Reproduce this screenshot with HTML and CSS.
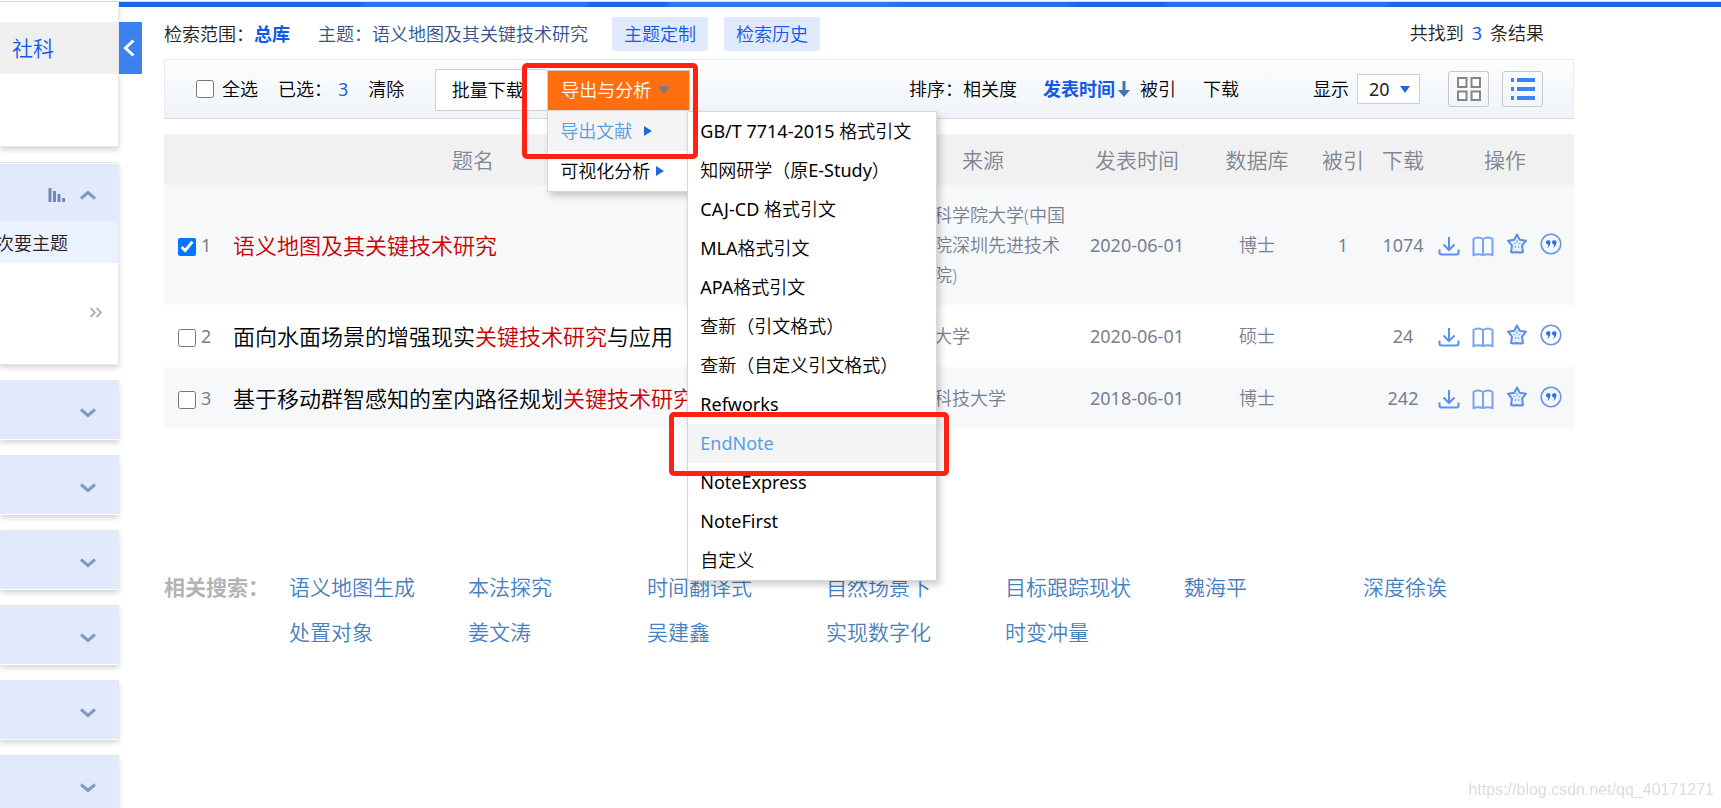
FILE: index.html
```html
<!DOCTYPE html>
<html lang="zh-CN">
<head>
<meta charset="utf-8">
<title>语义地图及其关键技术研究</title>
<link rel="stylesheet" href="styles.css">
</head>
<body>
<svg class="defs" aria-hidden="true">
  <symbol id="i-download" viewBox="0 0 22 22"><path d="M11 2v13M5.500 9.500L11 15l5.500-5.500M1.500 14.500v3q0 2 2 2h15q2 0 2-2v-3" fill="none" stroke="#5a90f2" stroke-width="2"/></symbol>
  <symbol id="i-book" viewBox="0 0 22 22"><path d="M1.500 4Q6 1 11 4Q16 1 20.500 4V20Q16 18.500 11 20Q6 18.500 1.500 20ZM11 4v16" fill="none" stroke="#76a3f4" stroke-width="2"/></symbol>
  <symbol id="i-star" viewBox="0 0 22 22"><path d="M11 1.500l2.700 5.300 6.300.9-4 5 1 6.300q-3 1-6 0-3 1-6 0l1-6.300-4-5 6.300-.9Z" fill="#e6f1fc" stroke="#5a90de" stroke-width="2" stroke-linejoin="round"/><path d="M11 7v3M7.500 10l2 1M14.500 10l-2 1M9 15l1-2M13 15l-1-2" stroke="#6a9ce6" stroke-width="1"/></symbol>
  <symbol id="i-quote" viewBox="0 0 22 22"><circle cx="11" cy="11" r="9.800" fill="none" stroke="#6496ea" stroke-width="1.600"/><path d="M6 9.500a2.200 2.200 0 1 1 4.300.5Q10 13.500 6.800 15q1.500-1.500 1.500-3.200Q6 11.500 6 9.500ZM12 9.500a2.200 2.200 0 1 1 4.300.5Q16 13.500 12.800 15q1.500-1.500 1.500-3.200Q12 11.500 12 9.500Z" fill="#2f6fe4"/></symbol>
  <symbol id="i-down" viewBox="0 0 16 10"><path d="M1 1.500l7 6 7-6" fill="none" stroke="#7f99c8" stroke-width="3"/></symbol>
</svg>
<div class="page">
  <aside class="sidebar">
    <section class="panel subjects"><a class="subject" href="#">社科</a></section>
    <section class="panel topics">
      <div class="panel-head">
        <svg width="18" height="16" viewBox="0 0 18 16"><path d="M2 1v14M6.500 4v11M11 7v8M15.500 11v4" stroke="#7088bc" stroke-width="3"/></svg>
        <svg class="up" width="16" height="10"><use href="#i-down"/></svg>
      </div>
      <div class="topic-tab">次要主题</div>
      <a class="more" href="#" aria-label="更多"><svg width="14" height="11" viewBox="0 0 14 11"><path d="M1.500 1l4.500 4.500-4.500 4.500M7.500 1l4.500 4.500-4.500 4.500" fill="none" stroke="#b4b4b4" stroke-width="2"/></svg></a>
    </section>
    <section class="panel folded"><svg width="16" height="10"><use href="#i-down"/></svg></section>
    <section class="panel folded"><svg width="16" height="10"><use href="#i-down"/></svg></section>
    <section class="panel folded"><svg width="16" height="10"><use href="#i-down"/></svg></section>
    <section class="panel folded"><svg width="16" height="10"><use href="#i-down"/></svg></section>
    <section class="panel folded"><svg width="16" height="10"><use href="#i-down"/></svg></section>
    <section class="panel folded"><svg width="16" height="10"><use href="#i-down"/></svg></section>
  </aside>
  <div class="content">
    <div class="strip"></div>
    <div class="columns">
      <button class="collapse" aria-label="收起"><svg width="12" height="18" viewBox="0 0 12 18"><path d="M10.500 1.500L2.500 9l8 7.500" fill="none" stroke="#fff" stroke-width="3"/></svg></button>
      <main class="main">
        <header class="scope">
          <p>检索范围：<b class="blue">总库</b></p>
          <p class="theme">主题：语义地图及其关键技术研究</p>
          <button class="tag">主题定制</button>
          <button class="tag">检索历史</button>
          <p class="count"><span>共找到</span><span class="blue en">3</span><span>条结果</span></p>
        </header>
        <div class="toolbar">
          <label class="all"><input type="checkbox">全选</label>
          <span class="picked">已选：<span class="num en">3</span></span>
          <a class="clear" href="#">清除</a>
          <button class="batch">批量下载</button>
          <div class="export">
            <button class="export-btn">导出与分析<svg width="14" height="10" viewBox="0 0 14 10"><path d="M1 1h12L7 9Z" fill="#7b7b7b"/></svg></button>
            <ul class="menu">
              <li class="on">导出文献<svg class="tri" width="8" height="10" viewBox="0 0 8 10"><path d="M0 0l8 5-8 5Z" fill="#2468d4"/></svg>
                <ul class="menu sub">
                  <li><span class="en">GB/T 7714-2015</span> 格式引文</li>
                  <li>知网研学（原<span class="en">E-Study</span>）</li>
                  <li><span class="en">CAJ-CD</span> 格式引文</li>
                  <li><span class="en">MLA</span>格式引文</li>
                  <li><span class="en">APA</span>格式引文</li>
                  <li>查新（引文格式）</li>
                  <li>查新（自定义引文格式）</li>
                  <li class="en">Refworks</li>
                  <li class="en on">EndNote<span class="mark mark-item"></span></li>
                  <li class="en">NoteExpress</li>
                  <li class="en">NoteFirst</li>
                  <li>自定义</li>
                </ul>
              </li>
              <li>可视化分析<svg class="tri near" width="8" height="10" viewBox="0 0 8 10"><path d="M0 0l8 5-8 5Z" fill="#2468d4"/></svg></li>
            </ul>
            <span class="mark mark-export"></span>
          </div>
          <nav class="sort">
            <span>排序：</span><a href="#">相关度</a>
            <a class="blue current" href="#">发表时间<svg width="12" height="17" viewBox="0 0 12 17"><path d="M6 0v11" stroke="#4a70b0" stroke-width="3"/><path d="M0 9h12L6 16Z" fill="#4a70b0"/></svg></a>
            <a class="cited" href="#">被引</a><a class="down" href="#">下载</a>
          </nav>
          <label class="size-label" for="size">显示</label>
          <div class="size"><select id="size" class="en"><option>20</option></select></div>
          <button class="view" aria-label="网格"><svg width="26" height="26" viewBox="0 0 26 26"><path d="M2 2h8.500v9H2ZM15.500 2H24v9h-8.500ZM2 15.500h8.500v8.500H2ZM15.500 15.500H24v8.500h-8.500Z" fill="#fff" stroke="#858585" stroke-width="2"/></svg></button>
          <button class="view list" aria-label="列表"><svg width="26" height="24" viewBox="0 0 26 24"><path d="M1 3h3M1 12h3M1 21h3M7 3h18M7 12h18M7 21h18" stroke="#3d83f7" stroke-width="4"/></svg></button>
        </div>
        <table class="results">
          <colgroup><col class="c-check"><col><col class="c-author"><col class="c-source"><col class="c-date"><col class="c-db"><col class="c-cited"><col class="c-dl"><col class="c-ops"></colgroup>
          <thead><tr><th></th><th>题名</th><th></th><th>来源</th><th>发表时间</th><th>数据库</th><th>被引</th><th>下载</th><th>操作</th></tr></thead>
          <tbody>
            <tr>
              <td class="check en"><label><input type="checkbox" checked>1</label></td>
              <td class="title"><a href="#"><em>语义地图及其关键技术研究</em></a></td><td></td>
              <td class="source">中国科学院大学(中国科学院深圳先进技术研究院)</td><td class="en">2020-06-01</td><td>博士</td><td class="en">1</td><td class="en">1074</td>
              <td><div class="ops"><a href="#" aria-label="下载"><svg><use href="#i-download"/></svg></a><a href="#" aria-label="阅读"><svg><use href="#i-book"/></svg></a><a class="high" href="#" aria-label="收藏"><svg><use href="#i-star"/></svg></a><a class="high" href="#" aria-label="引用"><svg><use href="#i-quote"/></svg></a></div></td>
            </tr>
            <tr>
              <td class="check en"><label><input type="checkbox">2</label></td>
              <td class="title"><a href="#">面向水面场景的增强现实<em>关键技术研究</em>与应用</a></td><td></td>
              <td class="source">武汉大学</td><td class="en">2020-06-01</td><td>硕士</td><td></td><td class="en">24</td>
              <td><div class="ops"><a href="#" aria-label="下载"><svg><use href="#i-download"/></svg></a><a href="#" aria-label="阅读"><svg><use href="#i-book"/></svg></a><a class="high" href="#" aria-label="收藏"><svg><use href="#i-star"/></svg></a><a class="high" href="#" aria-label="引用"><svg><use href="#i-quote"/></svg></a></div></td>
            </tr>
            <tr>
              <td class="check en"><label><input type="checkbox">3</label></td>
              <td class="title"><a href="#">基于移动群智感知的室内路径规划<em>关键技术研究</em></a></td><td></td>
              <td class="source">电子科技大学</td><td class="en">2018-06-01</td><td>博士</td><td></td><td class="en">242</td>
              <td><div class="ops"><a href="#" aria-label="下载"><svg><use href="#i-download"/></svg></a><a href="#" aria-label="阅读"><svg><use href="#i-book"/></svg></a><a class="high" href="#" aria-label="收藏"><svg><use href="#i-star"/></svg></a><a class="high" href="#" aria-label="引用"><svg><use href="#i-quote"/></svg></a></div></td>
            </tr>
          </tbody>
        </table>
        <section class="related">
          <h2>相关搜索：</h2>
          <div class="links">
            <a href="#">语义地图生成</a><a href="#">本法探究</a><a href="#">时间翻译式</a><a href="#">自然场景下</a><a href="#">目标跟踪现状</a><a href="#">魏海平</a><a href="#">深度徐诶</a>
            <a href="#">处置对象</a><a href="#">姜文涛</a><a href="#">吴建鑫</a><a href="#">实现数字化</a><a href="#">时变冲量</a>
          </div>
        </section>
      </main>
    </div>
  </div>
</div>
<p class="watermark">https://blog.csdn.net/qq_40171271</p>
</body>
</html>
```
FILE: styles.css
```css
* { box-sizing: border-box; }
body {
  margin: 0;
  height: 100vh;
  overflow: hidden;
  background: #fff;
  color: #000;
  font: 350 18px/30px "Open Sans", "Noto Sans CJK SC", sans-serif;
}
p, h2, ul { margin: 0; padding: 0; }
ul { list-style: none; }
a { color: inherit; text-decoration: none; }
button, select, input { font: inherit; color: inherit; margin: 0; }
button { padding: 0; border: 0; background: none; }
svg { display: block; flex: none; }
b { font-weight: 700; }
.en { font-family: "Noto Sans", "Noto Sans CJK SC", sans-serif; font-weight: 400; }
.defs { position: absolute; width: 0; height: 0; }
.blue { color: #1159e8; }

.page { display: flex; align-items: flex-start; border-top: 1px solid #fff; }
.content { flex: 1; min-width: 0; border-top: 1px solid #dcdcdc; }
.strip {
  height: 5px;
  background: linear-gradient(115deg, #1a66e8 15%, #2876ee 15.5%, #2876ee 29%, #1a66e8 29.5%, #1a66e8 34%, #2b7bed 34.5%, #2b7bed 48%, #2670e9 49%, #2670e9 59%, #1a66e8 60%, #1a66e8 65%, #2872ee 65.5%, #2872ee 79%, #1a66e8 79.5%);
}
.columns { display: flex; align-items: flex-start; }

/* sidebar */
.sidebar {
  width: 119px;
  display: flex;
  flex-direction: column;
  gap: 15px;
  border-top: 1px solid #dcdcdc;
}
.panel {
  border: solid #e8e8e8;
  border-width: 1px 1px 1px 0;
  background: #fff;
  box-shadow: 0 3px 5px rgba(0, 0, 0, .16);
}
.subjects { border-top: 0; padding-top: 20px; height: 145px; }
.subject { display: block; padding-left: 12px; background: #efefef; color: #1159e8; font-size: 21px; line-height: 52px; }
.topics { height: 203px; overflow: hidden; padding-top: 1px; }
.panel-head { display: flex; justify-content: flex-end; align-items: center; gap: 14px; height: 57px; padding: 4px 22px 0 0; background: #e1eafc; }
.up { transform: rotate(180deg); }
.topic-tab { height: 42px; line-height: 44px; background: #ebf1fe; color: #222; display: flex; justify-content: flex-end; padding-right: 50px; white-space: nowrap; }
.more { display: flex; justify-content: flex-end; padding: 44px 15px 0 0; }
.folded { display: flex; justify-content: flex-end; align-items: center; height: 60px; padding: 6px 22px 0 0; background: #e1eafc; border-bottom-color: #fff; }
.collapse { display: grid; justify-content: start; align-content: center; padding-left: 4px; width: 23px; height: 52px; margin-top: 15px; background: #3b82f0; }

/* search scope */
.main { flex: 1; min-width: 0; margin: 0 147px 0 22px; }
.scope { display: flex; align-items: center; height: 52px; padding-top: 2px; color: #222; white-space: nowrap; }
.theme { margin: 0 24px 0 28px; color: #355388; }
.tag { padding: 0 12px; height: 34px; margin-right: 16px; background: #e1eafc; color: #1159e8; }
.scope .count { display: flex; gap: 8px; margin: 0 30px 0 auto; padding-bottom: 2px; }

/* toolbar */
.toolbar {
  display: flex;
  align-items: center;
  height: 60px;
  padding: 0 30px 0 31px;
  border: 1px solid #e8ebf0;
  border-bottom-color: #d4dde8;
  background: linear-gradient(#fcfdfe, #eff3f8);
  white-space: nowrap;
}
input[type="checkbox"] { width: 18px; height: 18px; flex: none; accent-color: #0075ff; }
.all { display: flex; align-items: center; gap: 8px; }
.picked { margin-left: 20px; }
.num { margin-left: 6px; color: #1f5fd0; }
.clear { margin: 0 31px 0 20px; }
.batch { width: 112px; height: 42px; margin-top: 2px; padding-right: 8px; border: 1px solid #d0d0d0; border-right: 0; background: #fff; }
.export { position: relative; margin-top: 2px; }
.export-btn { display: flex; align-items: center; gap: 6px; padding: 0 0 2px 13px; width: 143px; height: 40px; background: #ff6f0f; color: #fff; border: 1px solid #dcc8b8; border-bottom: 0; }
.menu {
  position: absolute;
  z-index: 2;
  top: 40px;
  left: 0;
  width: 141px;
  border: 1px solid #d8d8d8;
  background: #fff;
  box-shadow: 3px 4px 7px rgba(0, 0, 0, .2);
}
.menu li { position: relative; display: flex; align-items: center; height: 40px; padding-left: 12px; color: #000; }
.menu li.on { background: #f4f4f4; color: #56a0e4; }
.menu.sub { top: 0; left: 139px; width: 250px; }
.menu.sub li { display: block; height: 39px; line-height: 39px; }
.tri { margin-left: 12px; }
.tri.near { margin-left: 6px; }
.mark { position: absolute; z-index: 3; border: 5px solid #ff2213; border-radius: 5px; pointer-events: none; }
.mark-export { top: -7px; left: -25px; width: 176px; height: 96px; }
.mark-item { top: -12px; left: -19px; width: 280px; height: 64px; }
.sort { display: flex; align-items: center; margin-left: auto; }
.current { display: flex; align-items: center; gap: 3px; margin-left: 26px; font-weight: 700; }
.cited { margin-left: 10px; }
.down { margin-left: 27px; }
.size-label { margin: 0 8px 0 74px; }
.size { position: relative; margin-right: 28px; }
.size::after { content: ""; position: absolute; right: 10px; top: 12px; border: solid transparent; border-width: 7px 5px 0; border-top-color: #2468d4; pointer-events: none; }
.size select { appearance: none; display: block; width: 63px; height: 30px; padding: 0 11px; line-height: 28px; border: 1px solid #cfcfcf; border-radius: 0; background: #fff; color: #222; }
.view { display: grid; place-items: center; width: 41px; height: 36px; border: 1px solid #c8c8c8; border-radius: 3px; }
.list { margin-left: 13px; }

/* results */
.results { width: 100%; margin-top: 15px; border-collapse: collapse; table-layout: fixed; color: #787f92; text-align: center; }
.c-check { width: 62px; }
.c-author { width: 170px; }
.c-source { width: 186px; }
.c-date { width: 122px; }
.c-db { width: 118px; }
.c-cited { width: 54px; }
.c-dl { width: 66px; }
.c-ops { width: 138px; }
th, td { padding: 0; }
th { height: 51px; background: #f1f1f1; color: #808692; font-size: 21px; font-weight: 350; white-space: nowrap; }
td { height: 62px; }
tbody tr:nth-child(odd) { background: #f6f8fa; }
.check label { display: flex; align-items: center; gap: 5px; padding-left: 14px; }
.check input { margin-top: 3px; }
.title { padding-left: 7px; text-align: left; font-size: 22px; white-space: nowrap; color: #000; }
.title em { font-style: normal; color: #c80000; }
.source { padding: 15px 8px; text-align: left; }
.ops { display: flex; justify-content: center; gap: 12px; padding: 2px 10px 0 0; }
.ops svg { width: 22px; height: 22px; }
.high { margin-top: -2px; }

/* related searches */
.related { display: flex; margin-top: 136px; font-size: 21px; line-height: 45px; }
.related h2 { width: 125px; flex: none; font-size: 21px; font-weight: 700; color: #b4b4b4; white-space: nowrap; }
.links { flex: 1; display: grid; grid-template-columns: repeat(auto-fill, 179px); color: #4680bf; }
.watermark { position: fixed; right: 7px; bottom: 4px; font: 16px/28px "Liberation Sans", sans-serif; color: #dcdcdc; }
```
